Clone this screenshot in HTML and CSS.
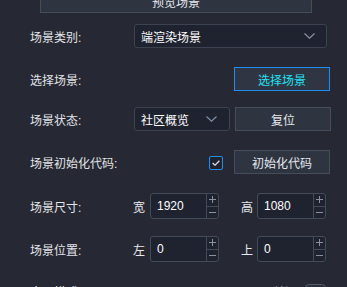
FILE: index.html
```html
<!DOCTYPE html>
<html lang="zh-CN">
<head>
<meta charset="utf-8">
<link rel="stylesheet" href="styles.css">
</head>
<body>
<div class="panel">
  <div class="top-btn">预览场景</div>

  <div class="row r1">
    <span class="label">场景类别:</span>
    <div class="select w-wide">
      <span>端渲染场景</span>
      <svg class="chev" width="11" height="6" viewBox="0 0 11 6"><polyline points="0.5,0.5 5.5,5.2 10.5,0.5" fill="none" stroke="#8a919e" stroke-width="1.2"/></svg>
    </div>
  </div>

  <div class="row r2">
    <span class="label">选择场景:</span>
    <div class="btn primary push-100">选择场景</div>
  </div>

  <div class="row r3">
    <span class="label">场景状态:</span>
    <div class="select w-half">
      <span>社区概览</span>
      <svg class="chev" width="11" height="6" viewBox="0 0 11 6"><polyline points="0.5,0.5 5.5,5.2 10.5,0.5" fill="none" stroke="#7f8ea3" stroke-width="1.2"/></svg>
    </div>
    <div class="btn gap5">复位</div>
  </div>

  <div class="row r4">
    <span class="label">场景初始化代码:</span>
    <div class="check">
      <svg width="8" height="6" viewBox="0 0 8 6"><polyline points="0.6,3 3,5.2 7.4,0.8" fill="none" stroke="#d6dae2" stroke-width="1.3"/></svg>
    </div>
    <div class="btn gap11">初始化代码</div>
  </div>

  <div class="row r5">
    <span class="label">场景尺寸:</span>
    <span class="unit">宽</span>
    <div class="num">
      <span class="val">1920</span>
      <div class="step">
        <span><svg width="7" height="7" viewBox="0 0 7 7"><path d="M0 3.5H7M3.5 0V7" stroke="#8a919e" stroke-width="1"/></svg></span>
        <span><svg width="7" height="7" viewBox="0 0 7 7"><path d="M0 3.5H7" stroke="#8a919e" stroke-width="1"/></svg></span>
      </div>
    </div>
    <span class="unit second">高</span>
    <div class="num">
      <span class="val">1080</span>
      <div class="step">
        <span><svg width="7" height="7" viewBox="0 0 7 7"><path d="M0 3.5H7M3.5 0V7" stroke="#8a919e" stroke-width="1"/></svg></span>
        <span><svg width="7" height="7" viewBox="0 0 7 7"><path d="M0 3.5H7" stroke="#8a919e" stroke-width="1"/></svg></span>
      </div>
    </div>
  </div>

  <div class="row r6">
    <span class="label">场景位置:</span>
    <span class="unit">左</span>
    <div class="num">
      <span class="val">0</span>
      <div class="step">
        <span><svg width="7" height="7" viewBox="0 0 7 7"><path d="M0 3.5H7M3.5 0V7" stroke="#8a919e" stroke-width="1"/></svg></span>
        <span><svg width="7" height="7" viewBox="0 0 7 7"><path d="M0 3.5H7" stroke="#8a919e" stroke-width="1"/></svg></span>
      </div>
    </div>
    <span class="unit second">上</span>
    <div class="num">
      <span class="val">0</span>
      <div class="step">
        <span><svg width="7" height="7" viewBox="0 0 7 7"><path d="M0 3.5H7M3.5 0V7" stroke="#8a919e" stroke-width="1"/></svg></span>
        <span><svg width="7" height="7" viewBox="0 0 7 7"><path d="M0 3.5H7" stroke="#8a919e" stroke-width="1"/></svg></span>
      </div>
    </div>
  </div>

  <div class="row r7">
    <span class="label">全屏模式</span>
    <span class="off">关闭</span>
    <span class="toggle"></span>
  </div>
</div>
</body>
</html>
```

FILE: styles.css
```css
html, body {
  margin: 0;
  padding: 0;
  background: #262934;
}
body {
  width: 347px;
  height: 287px;
  overflow: hidden;
  font-family: "Liberation Sans", "Noto Sans CJK SC", sans-serif;
  font-size: 12px;
  color: #e3e5ea;
}
.panel {
  padding-top: 1px;
  margin-top: -12px;
}
.top-btn {
  margin-left: 40px;
  width: 272px;
  height: 24px;
  box-sizing: border-box;
  border: 1px solid #444b59;
  background: #2f3441;
  display: flex;
  align-items: center;
  justify-content: center;
  color: #e8eaee;
}
.row {
  display: flex;
  align-items: center;
  padding-left: 30px;
}
.label {
  width: 104px;
  flex: none;
  color: #e3e5ea;
}
.r1 { margin-top: 11px; }
.r2 { margin-top: 19px; }
.r3 { margin-top: 16px; }
.r4 { margin-top: 19px; }
.r5 { margin-top: 19px; }
.r6 { margin-top: 17px; }
.r7 { margin-top: 22px; height: 14px; }

.select {
  display: flex;
  align-items: center;
  justify-content: space-between;
  height: 24px;
  box-sizing: border-box;
  border: 1px solid #3c4250;
  border-radius: 3px;
  background: #1f2330;
  padding: 0 11px 0 6px;
  color: #ffffff;
}
.w-wide { width: 193px; }
.w-half { width: 96px; padding-right: 12px; }

.btn {
  height: 24px;
  width: 96px;
  flex: none;
  box-sizing: border-box;
  border: 1px solid #454c5a;
  background: #2f3441;
  display: flex;
  align-items: center;
  justify-content: center;
  color: #e8eaee;
}
.btn.primary {
  border-color: #1e8ef5;
  color: #22e3f5;
  background: #2f3542;
}
.push-100 { margin-left: 100px; }
.gap5 { margin-left: 5px; }
.gap11 { margin-left: 11px; }

.check {
  margin-left: 75px;
  width: 14px;
  height: 14px;
  box-sizing: border-box;
  border: 1px solid #1e8ef5;
  border-radius: 2px;
  background: #1f2330;
  display: flex;
  align-items: center;
  justify-content: center;
  position: relative;
  top: 1px;
}

.unit {
  width: 12px;
  margin-left: -1px;
  margin-right: 5px;
  color: #e8eaee;
}
.unit.second { margin-left: 22px; margin-right: 4px; }

.num {
  display: flex;
  width: 69px;
  height: 26px;
  box-sizing: border-box;
  border: 1px solid #434a58;
  border-radius: 3px;
  background: #1f2330;
}
.val {
  flex: 1;
  display: flex;
  align-items: center;
  padding-left: 6px;
  color: #ffffff;
}
.step {
  width: 12px;
  box-sizing: border-box;
  border-left: 1px solid #434a58;
  display: flex;
  flex-direction: column;
}
.step span {
  flex: 1;
  display: flex;
  align-items: center;
  justify-content: center;
}
.step span + span {
  border-top: 1px solid #434a58;
}
.step svg { display: block; }

.off {
  margin-left: 139px;
  color: #c9ccd3;
}
.toggle {
  margin-left: 6px;
  width: 25px;
  height: 14px;
  box-sizing: border-box;
  border: 1px solid #555c6a;
  border-radius: 7px;
  background: #2a2e3a;
}
```
